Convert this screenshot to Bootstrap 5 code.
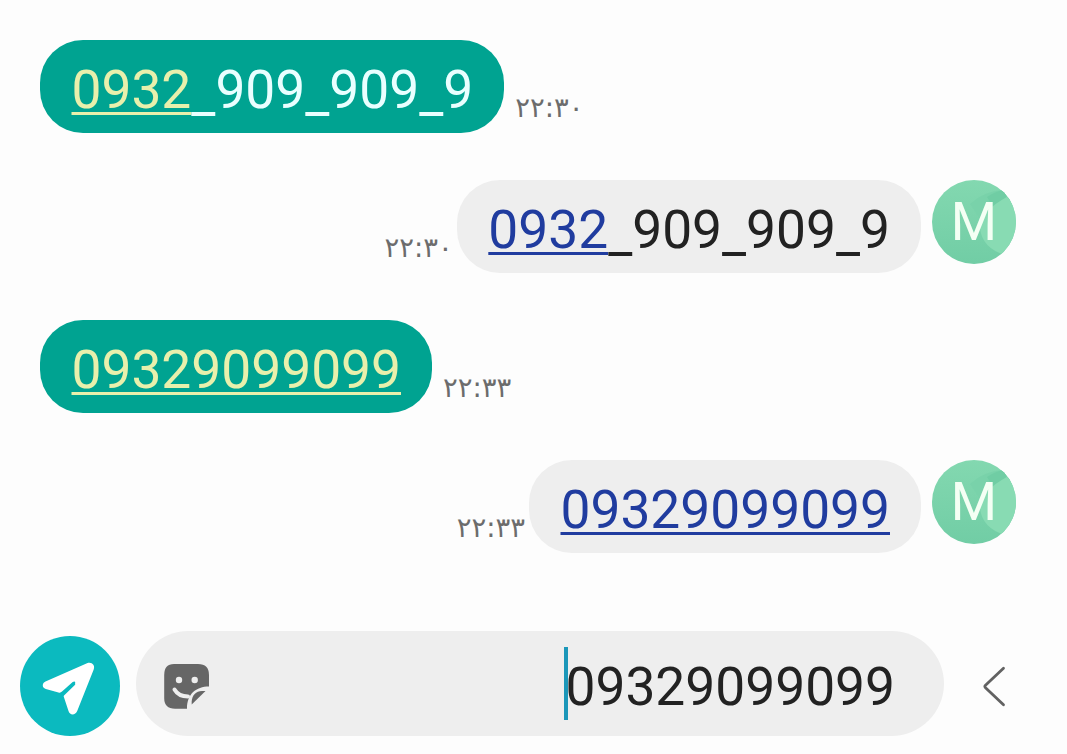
<!DOCTYPE html>
<html lang="fa">
<head>
  <meta charset="UTF-8">
  <meta name="viewport" content="width=device-width, initial-scale=1">
  <title>Messages</title>
  <link href="https://cdn.jsdelivr.net/npm/bootstrap@5.3.3/dist/css/bootstrap.min.css" rel="stylesheet">
  <style>
    body {
      height: 754px;
      background: #fdfdfd;
      color: #222;
      font-family: Roboto, "Liberation Sans", sans-serif;
      overflow: hidden;
    }
    .chat {
      padding: 40px 51px 0 40px;
      gap: 47px;
    }
    .message {
      height: 93px;
    }
    .bubble {
      height: 93px;
      padding: 8px 31px 0 31.5px;
      border-radius: 43px;
      font-size: 53.3px;
      line-height: 85px;
      white-space: nowrap;
    }
    .bubble a {
      text-decoration: underline;
      text-decoration-thickness: 2.7px;
      text-underline-offset: 4px;
      text-decoration-skip-ink: none;
    }
    .bubble i {
      font-style: normal;
      line-height: 0;
      vertical-align: -4px;
    }
    .sent {
      background: #00a391;
      color: #e9ffff;
    }
    .sent a {
      color: #e8f0ac;
    }
    .received {
      background: #eee;
      color: #222;
    }
    .received a {
      color: #203c9f;
    }
    .msg-time {
      color: #6c6c6c;
      font-family: "DejaVu Sans", sans-serif;
      font-size: 27.5px;
      line-height: 30px;
      padding-bottom: 11px;
      white-space: nowrap;
    }
    .sent + .msg-time {
      margin-left: 11px;
    }
    .received-time {
      margin-right: 4px;
    }
    .avatar {
      width: 84px;
      height: 84px;
      margin-left: 11px;
    }
    .composer {
      padding: 0 61px 18px 20px;
    }
    .send-btn {
      width: 100px;
      height: 100px;
      background: #0bbabf;
    }
    .input-box {
      width: 808px;
      height: 105px;
      margin-left: 16px;
      padding: 0 49px 0 26px;
      border-radius: 53px;
      background: #eee;
    }
    .sticker {
      margin-top: 5px;
    }
    .typed {
      font-size: 53.3px;
      line-height: 80px;
      height: 73px;
    }
    .caret {
      left: -2px;
      top: 0;
      width: 4px;
      height: 73px;
      background: #1b97b9;
    }
  </style>
</head>
<body class="d-flex flex-column justify-content-between">

<!-- Conversation -->
<main class="chat d-flex flex-column">
  <div class="message d-flex align-items-end">
    <div class="bubble sent"><a href="#">0932</a><i>_</i>909<i>_</i>909<i>_</i>9</div>
    <span class="msg-time">۲۲:۳۰</span>
  </div>

  <div class="message d-flex align-items-end justify-content-end">
    <span class="msg-time received-time">۲۲:۳۰</span>
    <div class="bubble received"><a href="#">0932</a><i>_</i>909<i>_</i>909<i>_</i>9</div>
    <svg class="avatar align-self-start" viewBox="0 0 84 84">
      <use href="#avatar-bg"/>
      <text x="42" y="60" text-anchor="middle" font-size="53" fill="#f4fff4">M</text>
    </svg>
  </div>

  <div class="message d-flex align-items-end">
    <div class="bubble sent"><a href="#">09329099099</a></div>
    <span class="msg-time">۲۲:۳۳</span>
  </div>

  <div class="message d-flex align-items-end justify-content-end">
    <span class="msg-time received-time">۲۲:۳۳</span>
    <div class="bubble received"><a href="#">09329099099</a></div>
    <svg class="avatar align-self-start" viewBox="0 0 84 84">
      <use href="#avatar-bg"/>
      <text x="42" y="60" text-anchor="middle" font-size="53" fill="#f4fff4">M</text>
    </svg>
  </div>
</main>

<!-- Composer -->
<footer class="composer d-flex align-items-end">
  <button type="button" class="send-btn btn border-0 rounded-circle p-0 flex-shrink-0" aria-label="Send">
    <svg class="d-block" width="100" height="100" viewBox="0 0 100 100">
      <path d="M25.5 45.5 L67 27.3 C71.5 25.5 75.5 29 73.7 33.5 L57.2 75 C55.3 79.5 49.8 79.5 48.5 75 L43.7 60.5 C43.2 59 43.6 58.3 44.6 57.3 L54.5 47.8 C56.3 46 54.6 44.5 52.7 46 L42 55.5 C41 56.5 40 57 38.5 56.5 L25.8 53 C21.7 51.7 22 47 25.5 45.5 Z" fill="#fff"/>
      <path d="M42.5 59 L53.8 48" stroke="#0bbabf" stroke-width="3" stroke-linecap="round"/>
    </svg>
  </button>

  <div class="input-box d-flex align-items-center justify-content-between flex-shrink-0">
    <svg class="sticker" width="48" height="48" viewBox="0 0 48 48">
      <path d="M12 2 H36 Q47 2 47 13 V24.5 C34 24.5 25 32 25 46.7 H13 Q2.2 46.7 2.2 36 V13 Q2.2 2 12 2 Z" fill="#666"/>
      <circle cx="17" cy="18" r="3.2" fill="#eee"/>
      <circle cx="32.7" cy="18" r="3.2" fill="#eee"/>
      <path d="M12.5 27.5 Q16.5 34.5 26 34.5" fill="none" stroke="#eee" stroke-width="4" stroke-linecap="round"/>
      <path d="M29.7 42.5 V39.5 C30 33 34 29.3 40 29 H43.5 Z" fill="#666"/>
    </svg>
    <div class="typed position-relative">
      <span class="caret position-absolute"></span>
      <span class="position-relative">09329099099</span>
    </div>
  </div>

  <button type="button" class="btn border-0 p-0 ms-auto" aria-label="Back">
    <svg class="d-block" width="24" height="100" viewBox="0 0 24 100">
      <path d="M21.5 32.3 L3.5 49.3 Q2.3 50.5 3.5 51.7 L21.5 68.7" fill="none" stroke="#626262" stroke-width="2.8" stroke-linecap="round"/>
    </svg>
  </button>
</footer>

<!-- Shared avatar background -->
<svg class="position-absolute" width="0" height="0">
  <defs>
    <linearGradient id="avatar-fill" x1="0" y1="0" x2="0" y2="1">
      <stop offset="0" stop-color="#83d8b0"/>
      <stop offset="1" stop-color="#71cda5"/>
    </linearGradient>
    <clipPath id="avatar-clip"><circle cx="42" cy="42" r="42"/></clipPath>
    <g id="avatar-bg" clip-path="url(#avatar-clip)">
      <rect width="84" height="84" fill="url(#avatar-fill)"/>
      <path d="M38 24 Q52 11 71 10 L84 22 L50 42 Z" fill="#79d2aa"/>
      <path d="M61 27 Q70 22 75 16 L71 10 Q62 12 55 17 Z" fill="#70cda4"/>
      <path d="M48 48 Q50 30 75 17 L90 30 V75 H73 Q50 68 48 48 Z" fill="#88dbb3"/>
    </g>
  </defs>
</svg>

<script src="https://cdn.jsdelivr.net/npm/bootstrap@5.3.3/dist/js/bootstrap.bundle.min.js"></script>
</body>
</html>
